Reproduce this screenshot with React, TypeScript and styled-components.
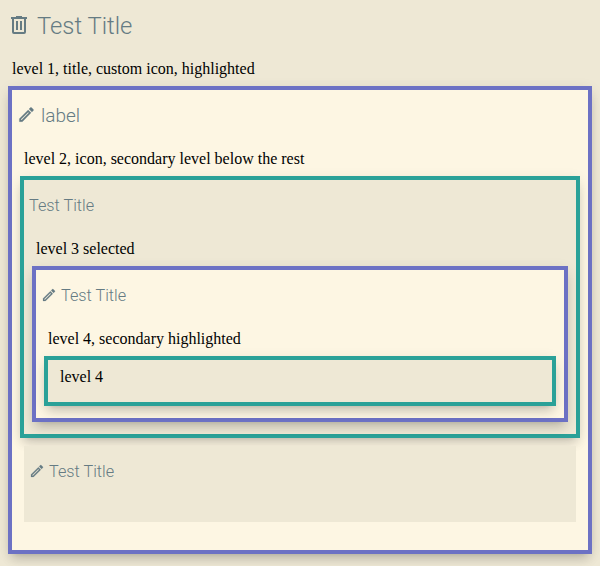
import React from "react";
import styled, { createGlobalStyle } from "styled-components";

const GlobalStyle = createGlobalStyle`
  body {
    margin: 0;
    background: #eee8d5;
    color: #000;
    font: 16px/18px "Liberation Serif", "Times New Roman", serif;
  }
`;

type Tone = "violet" | "cyan";
const tones = { violet: "#6c71c4", cyan: "#2aa198" };

const Page = styled.main`
  box-sizing: border-box;
  min-height: 566px;
  overflow: hidden;
  background: #eee8d5;
`;

const Panel = styled.section<{ $light?: boolean; $tone?: Tone }>`
  position: relative;
  margin-top: 12px;
  background: ${(p) => (p.$light ? "#fdf6e3" : "#eee8d5")};
  ${(p) =>
    p.$tone &&
    `outline: 4px solid ${tones[p.$tone]};
     box-shadow: 0 5px 5px -3px rgba(0, 0, 0, 0.2), 0 8px 10px 1px rgba(0, 0, 0, 0.14),
       0 3px 14px 2px rgba(0, 0, 0, 0.12);`}
`;

const Header = styled.header<{ $size: number; $indent: number; $gap?: number }>`
  display: flex;
  align-items: center;
  gap: ${(p) => p.$gap ?? 4}px;
  height: 52px;
  box-sizing: border-box;
  padding-left: ${(p) => p.$indent}px;
  color: #657b83;
  font: 300 ${(p) => p.$size}px/24px Roboto, sans-serif;
`;

const Icon = styled.svg<{ $lift?: number }>`
  display: block;
  flex: none;
  margin-bottom: ${(p) => p.$lift ?? 2}px;
  fill: currentColor;
`;

const Content = styled.div<{ $bottom?: number }>`
  padding: 8px 12px ${(p) => p.$bottom ?? 16}px;
`;

const Text = styled.div`
  height: 18px;
`;

const TrashIcon = () => (
  <Icon width="24" height="24" viewBox="0 0 24 24">
    <path d="M9 3v1H4v2h1v13a2 2 0 0 0 2 2h10a2 2 0 0 0 2-2V6h1V4h-5V3H9zM7 6h10v13H7V6zm2 2v9h2V8H9zm4 0v9h2V8h-2z" />
  </Icon>
);

const PencilIcon = ({ size, lift }: { size: number; lift?: number }) => (
  <Icon width={size} height={size} viewBox="0 0 24 24" $lift={lift}>
    <path
      stroke="currentColor"
      strokeWidth="0.3"
      d="M14.06 9.02l.92.92L5.92 19H5v-.92l9.06-9.06M17.66 3c-.25 0-.51.1-.7.29l-1.83 1.83 3.75 3.75 1.83-1.83a.996.996 0 0 0 0-1.41l-2.34-2.34c-.2-.2-.45-.29-.71-.29zm-3.6 3.19L3 17.25V21h3.75L17.81 9.94l-3.75-3.75z"
    />
  </Icon>
);

export default function App() {
  return (
    <>
      <GlobalStyle />
      <Page>
        <Header $size={23.8} $indent={7} $gap={6}>
          <TrashIcon />
          Test Title
        </Header>
        <Content>
          <Text>level 1, title, custom icon, highlighted</Text>
          <Panel $light $tone="violet">
            <Header $size={19} $indent={5} $gap={5}>
              <PencilIcon size={19} lift={3} />
              label
            </Header>
            <Content $bottom={28}>
              <Text>level 2, icon, secondary level below the rest</Text>
              <Panel $tone="cyan">
                <Header $size={16.25} $indent={5}>Test Title</Header>
                <Content>
                  <Text>level 3 selected</Text>
                  <Panel $light $tone="violet">
                    <Header $size={16.25} $indent={5}>
                      <PencilIcon size={16} />
                      Test Title
                    </Header>
                    <Content>
                      <Text>level 4, secondary highlighted</Text>
                      <Panel $tone="cyan">
                        <Content>
                          <Text>level 4</Text>
                        </Content>
                      </Panel>
                    </Content>
                  </Panel>
                </Content>
              </Panel>
              <Panel>
                <Header $size={16.25} $indent={5}>
                  <PencilIcon size={16} />
                  Test Title
                </Header>
                <Content />
              </Panel>
            </Content>
          </Panel>
        </Content>
      </Page>
    </>
  );
}
